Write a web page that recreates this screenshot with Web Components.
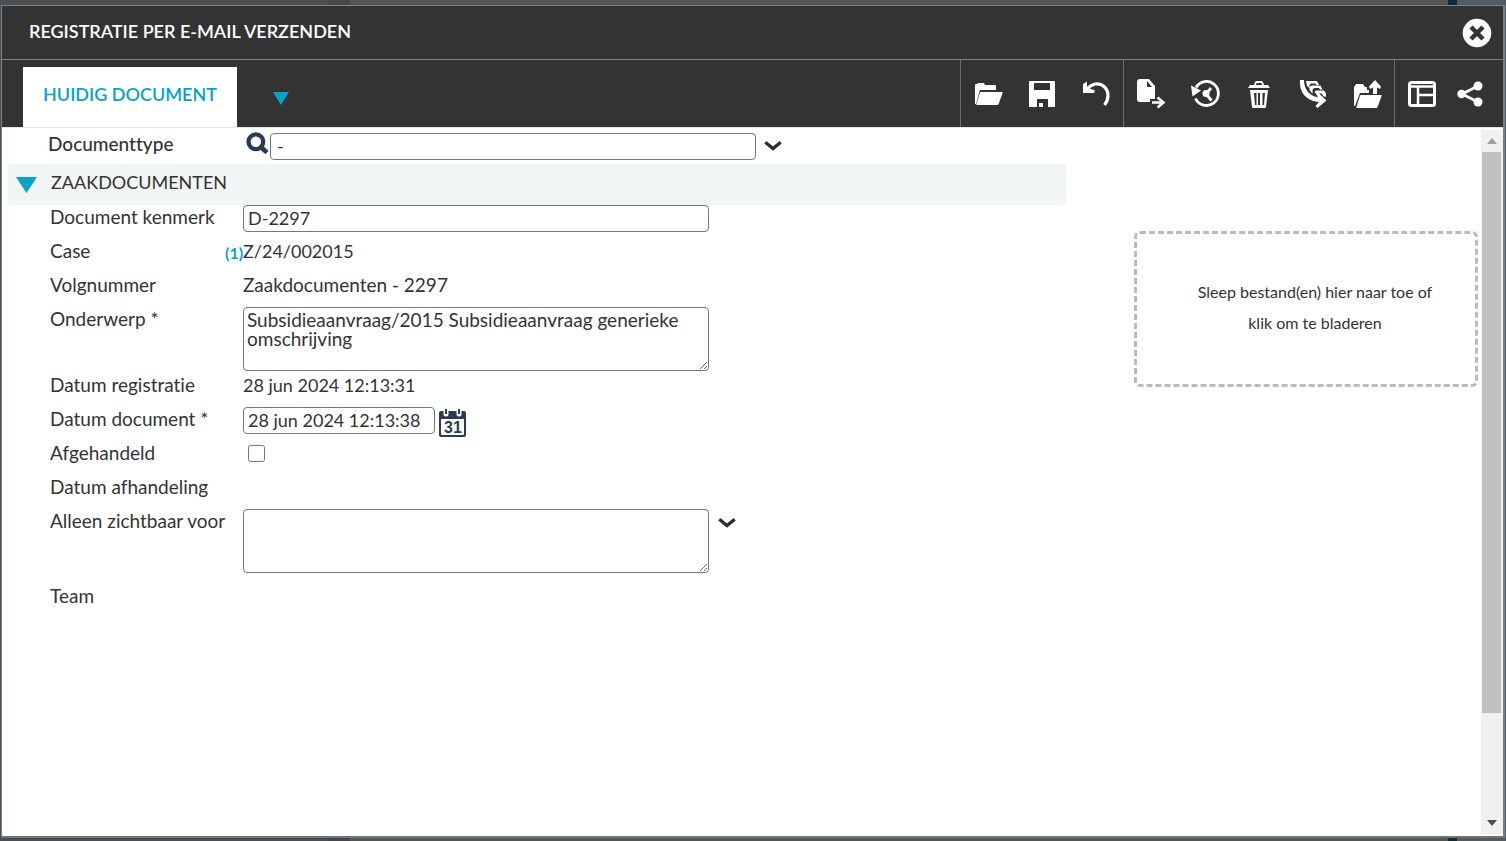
<!DOCTYPE html>
<html lang="nl">
<head>
<meta charset="utf-8">
<title>Registratie per e-mail verzenden</title>
<style>
html, body { height: 100%; margin: 0; }
body { background: #58595b; font-family: Lato, "Liberation Sans", sans-serif; font-variant-ligatures: none; color: #333; overflow: hidden; }
</style>
</head>
<body>
<mail-dialog></mail-dialog>

<script>
const define = (name, html, setup) => {
  const template = document.createElement('template');
  template.innerHTML = html;
  customElements.define(name, class extends HTMLElement {
    connectedCallback() {
      if (this.shadowRoot) return;
      const root = this.attachShadow({ mode: 'open' });
      root.append(template.content.cloneNode(true));
      if (setup) setup(this, root);
    }
  });
};

const icons = {
  open: '<path fill="#fff" d="M1 24V5q0-1 1-1h1l1-1h6l1 2h10q1 0 1 1v4H6L2 24z"/><path fill="#fff" d="M7 12h21q1 0 .6 1l-4 11q-.3 1-1.400 1H3q-1 0-.6-1l3.500-11q.3-1 1.100-1z"/>',
  save: '<path fill="#fff" fill-rule="evenodd" d="M1 2q0-1 1-1h24q1 0 1 1v25h-7v-8H9v8H1zM6 3v7h16V3z"/><path fill="#fff" d="M11 23h4v4h-4z"/>',
  undo: '<path fill="none" stroke="#fff" stroke-width="3.200" d="M5 9C10 3.500 17 2 22 6.500s5.500 12 .5 18.500"/><path fill="#fff" d="M1 4l4-2.500v6l8 3-1 2.500H1z"/>',
  send: '<path fill="#fff" fill-rule="evenodd" d="M3 -1h9l6 7v13h-5v3H3q-3 0-3-3V2q0-3 3-3zm7 2v6h5z"/><path fill="none" stroke="#fff" stroke-width="2.600" d="M15 22.500h11M20.500 17.500l6 5-6 5"/>',
  history: '<path fill="none" stroke="#fff" stroke-width="2.800" d="M5 7.500A12 12 0 1 1 4.500 18.500M20 8l-5 6 5.500 6.500"/><circle cx="15" cy="13.500" r="3.500" fill="#fff"/><path fill="#fff" d="M0 5.500l10 5-8.500 6z"/>',
  trash: '<path fill="#fff" fill-rule="evenodd" d="M3 8l2-3h4l1-3q1-1 2-1h4q1 0 2 1l1 3h4l2 3zM11.500 3l-.5 2h6l-.5-2z"/><path fill="#fff" fill-rule="evenodd" d="M5 10h18l-2 17q0 1-1 1H8q-1 0-1-1zm4 3l1 12h1.500V13zm4 0v12h2V13zm4.500 0v12H19l1-12z"/>',
  move: '<path fill="#fff" d="M1 0h4c0 9 5 15.500 14 17.500l-2-4.500 2-.5 8.500 8-9 7.500-2-2 3.500-4C8 21 0 13 1 0z"/><path fill="#fff" d="M7 1h11l2 4h-2.500l-1-1.500H12L10.500 5v3L8 6zM10.500 7l2-1.500h9l2 4H21l-1-1.500h-5L13.500 10v4l-3-4zM15.500 12l1.500-1.500h8l2 3V17l-3-1-1-2.500h-4L18 15z"/>',
  upload: '<path fill="#fff" d="M1 26V7q0-1 1-1l1-2h7l2 3h2v3h2v3H7L2 26z"/><path fill="#fff" d="M8 15h20q1 0 .6 1l-4 11q-.4 1-1.500 1H4q-1 0-.6-1l3.500-11q.3-1 1.100-1zM22 0l6 6.500-1 2.500-3-1.500V14h-4V7.500L17 9l-1-2.500z"/>',
  layout: '<rect x="1.500" y="2.500" width="25" height="23" rx="2" fill="none" stroke="#fff" stroke-width="3"/><path fill="none" stroke="#fff" stroke-width="2.500" d="M2 6.500h24M10 7v19M11 15h15"/>',
  share: '<path fill="none" stroke="#fff" stroke-width="2.800" d="M22 6L6 14l16 8"/><circle cx="5.500" cy="14" r="4.200" fill="#fff"/><circle cx="22" cy="6" r="4.500" fill="#fff"/><circle cx="22" cy="22" r="4.500" fill="#fff"/>',
  close: '<circle cx="14" cy="14" r="14.300" fill="#fff"/><path stroke="#333" stroke-width="4.500" d="M8 8l12 12M20 8L8 20"/>',
  search: '<circle cx="11.500" cy="12.500" r="8.600" fill="none" stroke="#2b3b55" stroke-width="5"/><path stroke="#2b3b55" stroke-width="5.500" d="M17 18.500l7.500 6.500"/>',
  chevron: '<path fill="none" stroke="#2e2e2e" stroke-width="3.800" d="M5 9.500l9 7.500 9-7.500"/>',
  calendar: '<path fill="#2b3b55" fill-rule="evenodd" d="M0 4q0-2 2-2h23q2 0 2 2v22q0 2-2 2H2q-2 0-2-2zm2 6v15q0 1 1 1h21q1 0 1-1V10z"/><path stroke="#fff" stroke-width="5" stroke-linecap="round" d="M7 1v4M20 1v4"/><path stroke="#2b3b55" stroke-width="2" d="M7 0v5M20 0v5"/><text x="14" y="24" text-anchor="middle" font-family="Liberation Sans, sans-serif" font-weight="700" font-size="16" fill="#2b3b55">31</text>'
};

define('ui-icon', `
<style>
  :host { display: block; flex: none; width: 28px; height: 28px; }
  :host([size="small"]) { width: 24px; height: 24px; }
  svg { display: block; width: 100%; height: 100%; overflow: visible; }
</style>`, (host, root) => {
  root.innerHTML += `<svg viewBox="0 0 28 28" aria-hidden="true">${icons[host.getAttribute('name')]}</svg>`;
});

define('icon-button', `
<style>
  :host { display: flex; width: 54px; }
  :host([compact]) { width: 28px; }
  :host([narrow]) { width: 42px; }
  button { display: flex; align-items: center; justify-content: center; width: 100%; padding: 0; border: 0; background: none; cursor: pointer; }
</style>
<button type="button"><ui-icon></ui-icon></button>`, (host, root) => {
  const icon = document.createElement('ui-icon');
  icon.setAttribute('name', host.getAttribute('icon'));
  if (host.hasAttribute('small')) icon.setAttribute('size', 'small');
  root.querySelector('ui-icon').replaceWith(icon);
  root.querySelector('button').setAttribute('aria-label', host.getAttribute('label'));
});

define('tool-group', `
<style>
  :host { display: flex; border-left: 1px solid #66707a; }
</style>
<slot></slot>`);

define('dialog-header', `
<style>
  :host { display: flex; align-items: center; justify-content: space-between; height: 53px; padding: 0 12px 0 27px; background: #333; color: #fff; border-bottom: 1px solid #7b8186; }
  h1 { margin: 0; padding-bottom: 3px; font-size: 18px; line-height: 24px; font-weight: 600; }
</style>
<h1><slot></slot></h1>
<icon-button compact icon="close" label="Sluiten"></icon-button>`);

define('dialog-toolbar', `
<style>
  :host { display: flex; height: 67px; background: #333; border-bottom: 1px solid #e4e6e8; }
  nav { display: flex; flex: 1; align-items: flex-end; padding-left: 21px; }
  a { height: 60px; padding: 0 20px; box-sizing: border-box; background: #fff; color: #0ba3c4; font-size: 18px; line-height: 54px; font-weight: 600; text-decoration: none; }
  .more { width: 16px; height: 60px; margin-left: 36px; padding: 2px 0 0; border: 0; background: none; }
  .more svg { display: block; }
  .tools { display: flex; padding-right: 12px; }
</style>
<nav>
  <a href="#huidig">HUIDIG DOCUMENT</a>
  <button class="more" type="button" aria-label="Meer tabbladen"><svg width="16" height="13" viewBox="0 0 16 13"><path fill="#0ba3c4" d="M0 0h16L8 13z"/></svg></button>
</nav>
<div class="tools">
  <tool-group>
    <icon-button icon="open" label="Openen"></icon-button>
    <icon-button icon="save" label="Opslaan"></icon-button>
    <icon-button icon="undo" label="Ongedaan maken"></icon-button>
  </tool-group>
  <tool-group>
    <icon-button icon="send" label="Verzenden"></icon-button>
    <icon-button icon="history" label="Historie"></icon-button>
    <icon-button icon="trash" label="Verwijderen"></icon-button>
    <icon-button icon="move" label="Verplaatsen"></icon-button>
    <icon-button icon="upload" label="Uploaden"></icon-button>
  </tool-group>
  <tool-group>
    <icon-button icon="layout" label="Indeling"></icon-button>
    <icon-button narrow icon="share" label="Delen"></icon-button>
  </tool-group>
</div>`);

define('section-bar', `
<style>
  :host { display: block; background: #f1f5f6; }
  h2 { margin: 0; font-size: 18px; font-weight: 400; }
  button { display: flex; align-items: center; gap: 14px; width: 100%; height: 41px; padding: 0 0 5px 8px; border: 0; background: none; font: inherit; color: #333; text-align: left; }
  svg { margin-top: 5px; }
</style>
<h2><button type="button" aria-expanded="true"><svg width="21" height="16" viewBox="0 0 21 16" aria-hidden="true"><path fill="#0ba3c4" d="M0 0h21L10.500 16z"/></svg><slot></slot></button></h2>`);

const fieldStyle = `
  * { box-sizing: border-box; }
  input[type="text"], textarea { display: block; margin: 0; border: 1px solid #767676; border-radius: 4px; background: #fff; color: #333; font-family: inherit; }
  input[type="text"] { height: 27px; padding: 0 4px 2px; font-size: 18px; }
  textarea { height: 64px; padding: 2px 3px; font-size: 19px; line-height: 19px; resize: both; }
`;

define('type-field', `
<style>${fieldStyle}
  :host { display: flex; height: 36px; padding-left: 40px; }
  label { width: 198px; font-size: 19px; line-height: 32px; font-weight: 500; }
  ui-icon { margin-top: 3px; }
  input[type="text"] { width: 486px; margin-top: 5px; padding-left: 6px; }
  icon-button { height: 24px; margin: 6px 0 0 3px; }
</style>
<label for="type">Documenttype</label>
<ui-icon name="search" size="small"></ui-icon>
<input id="type" type="text" value="-">
<icon-button compact small icon="chevron" label="Kies documenttype"></icon-button>`);

/* One label/value row; the kind attribute picks the control that is shown. */
define('form-row', `
<style>${fieldStyle}
  :host { display: grid; grid-template-columns: 193px 1fr; min-height: 34px; padding-left: 42px; }
  :host([kind="area"]) { min-height: 66px; }
  :host([kind="picker"]) { min-height: 75px; }
  .name { font-size: 19px; line-height: 24px; white-space: nowrap; }
  .value { display: flex; align-items: flex-start; font-size: 19px; line-height: 24px; }
  :host([numeric]) .value { font-size: 18px; }
  input[type="text"], textarea { width: 466px; }
  :host([kind="date"]) input { width: 192px; }
  icon-button { height: 28px; margin-left: 4px; }
  :host([kind="date"]) icon-button { margin-top: 2px; }
  input[type="checkbox"] { width: 17px; height: 17px; margin: 4px 5px; }
  a { width: 18px; margin-left: -18px; color: #0ba3c4; font-size: 16px; line-height: 27px; font-weight: 700; text-decoration: none; }
</style>
<label class="name" for="field"></label>
<div class="value"></div>`, (host, root) => {
  const kind = host.getAttribute('kind') || 'static';
  const value = host.getAttribute('value') || '';
  const controls = {
    static: `<output id="field">${value}</output>`,
    linked: `<a href="#zaak">(1)</a><output id="field">${value}</output>`,
    text: `<input id="field" type="text" value="${value}">`,
    area: `<textarea id="field" spellcheck="false">${value}</textarea>`,
    picker: `<textarea id="field">${value}</textarea><icon-button compact small icon="chevron" label="Kies gebruikers"></icon-button>`,
    date: `<input id="field" type="text" value="${value}"><icon-button compact icon="calendar" label="Kies datum"></icon-button>`,
    check: `<input id="field" type="checkbox">`
  };
  root.querySelector('label').textContent = host.getAttribute('label');
  root.querySelector('.value').innerHTML = controls[kind];
});

define('drop-zone', `
<style>
  :host { display: block; width: 344px; }
  button { width: 100%; height: 156px; box-sizing: border-box; padding: 0 36px 4px 54px; border: 3px dashed #bbb; border-radius: 6px; background: #fff; color: #333; font-family: inherit; font-size: 16px; line-height: 31px; }
</style>
<button type="button"><slot></slot></button>`);

define('scroll-track', `
<style>
  :host { display: flex; flex-direction: column; width: 22px; margin: 2px 0; background: #f0f0f0; }
  .end { display: flex; align-items: center; justify-content: center; height: 22px; }
  .rail { flex: 1; }
  .thumb { height: 85%; margin: 0 2px 0 1px; background: #c1c1c1; }
</style>
<div class="end"><svg width="10" height="6"><path fill="#a0a0a0" d="M0 6l5-6 5 6z"/></svg></div>
<div class="rail"><div class="thumb"></div></div>
<div class="end"><svg width="10" height="6"><path fill="#505050" d="M0 0h10L5 6z"/></svg></div>`);

define('mail-dialog', `
<style>
  :host { display: flex; flex-direction: column; box-sizing: border-box; height: 100vh; padding: 5px 1px 3px; background: linear-gradient(90deg, #4c4f51 0 328px, #454749 328px 350px, #555 350px 1448px, #0e2c33 1448px 1457px, #555a60 1457px); }
  section { display: flex; flex: 1; flex-direction: column; min-height: 0; border: 1px solid #78828a; border-right-width: 2px; border-bottom: 2px solid #6c757c; }
  .body { display: flex; flex: 1; min-height: 0; background: #fff; }
  .content { display: grid; flex: 1; grid-template-columns: 1fr 344px; gap: 68px; align-items: start; padding: 0 3px 0 6px; }
  drop-zone { margin-top: 103px; }
</style>
<section role="dialog">
  <dialog-header>REGISTRATIE PER E-MAIL VERZENDEN</dialog-header>
  <dialog-toolbar></dialog-toolbar>
  <div class="body">
    <div class="content">
      <form>
        <type-field></type-field>
        <section-bar>ZAAKDOCUMENTEN</section-bar>
        <form-row kind="text" label="Document kenmerk" value="D-2297"></form-row>
        <form-row kind="linked" label="Case" value="Z/24/002015" numeric></form-row>
        <form-row label="Volgnummer" value="Zaakdocumenten - 2297"></form-row>
        <form-row kind="area" label="Onderwerp *" value="Subsidieaanvraag/2015 Subsidieaanvraag generieke omschrijving"></form-row>
        <form-row label="Datum registratie" value="28 jun 2024 12:13:31" numeric></form-row>
        <form-row kind="date" label="Datum document *" value="28 jun 2024 12:13:38"></form-row>
        <form-row kind="check" label="Afgehandeld"></form-row>
        <form-row label="Datum afhandeling"></form-row>
        <form-row kind="picker" label="Alleen zichtbaar voor"></form-row>
        <form-row label="Team"></form-row>
      </form>
      <drop-zone>Sleep bestand(en) hier naar toe of klik om te bladeren</drop-zone>
    </div>
    <scroll-track></scroll-track>
  </div>
</section>`);
</script>
</body>
</html>
